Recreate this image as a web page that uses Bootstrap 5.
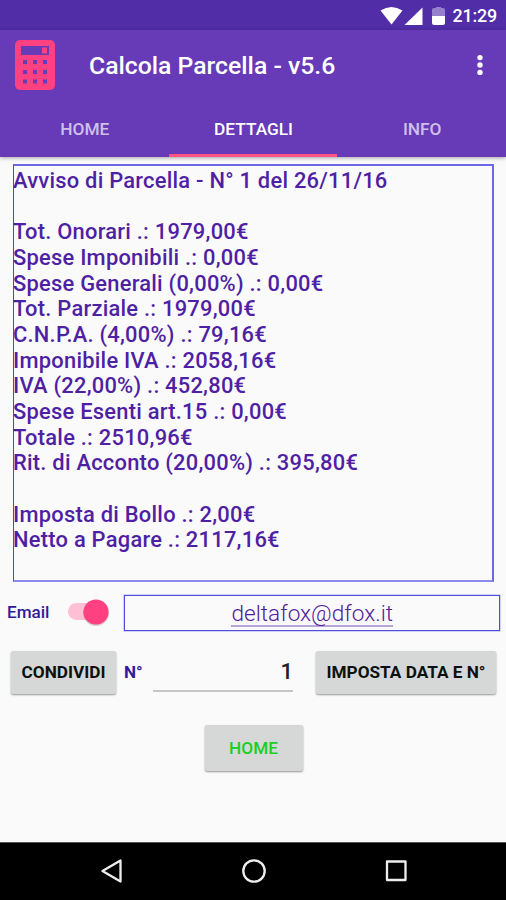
<!DOCTYPE html>
<html lang="it">
<head>
<meta charset="utf-8">
<meta name="viewport" content="width=device-width, initial-scale=1">
<title>Calcola Parcella</title>
<link href="https://cdn.jsdelivr.net/npm/bootstrap@5.3.0/dist/css/bootstrap.min.css" rel="stylesheet">
<style>
body{font-family:Roboto,"Liberation Sans",sans-serif;background:#fafafa;height:900px;overflow:hidden;line-height:1.172}
svg{display:block;flex:none}
.medium{font-weight:500}
.status-bar{height:30px;background:#512da8;padding:1px 9px 0 0;font-size:17.9px}
.clock{margin-left:7px;letter-spacing:-.2px}
.app-header{height:127px;background:#673ab7;box-shadow:0 1px 4px rgba(0,0,0,.35)}
.title-bar{height:72px;padding:0 22px 2px 15px}
.app-title{font-size:24.75px;margin:2px 0 0 34px}
.app-tabs{height:55px}
.app-tabs .nav-link{color:#cfc0e9;font-size:17.3px;padding:2px 0 0 1px;border-radius:0;border-bottom:3px solid transparent}
.app-tabs .nav-link.active{color:#fff;border-color:#ff5484}
.report{margin:7px 12px 0 13px;height:418px;border:2px solid #6c68e8;border-left:1px solid #4844e4;border-bottom-color:#8d8aee;color:#4f1fa4;font-size:21.9px;letter-spacing:.24px;line-height:25.67px;padding-top:2px;white-space:pre-line}
.report-text{margin-left:-1px}
.email-row{margin-top:13px;height:37px;padding:0 6px 0 7px}
.blue-label{color:#311b9b;font-size:17.1px}
.email-label{margin-top:-3px}
.switch{width:42px;margin:-1px 15px 0 18px}
.email-box{border:1px solid #524ddf;box-shadow:0 0 0 .5px #a9a6f2;color:#512099;font-size:22.6px;font-weight:300;height:36px;margin-top:-1px;padding-top:3px}
.email-box span{border-bottom:2px solid #b7a5d8;line-height:22px}
.actions{margin-top:19px;padding:0 10px 0 11px}
.btn-raised{background:#d6d7d7;border:0;border-radius:2px;box-shadow:0 1px 2px rgba(0,0,0,.4);font-size:17.2px;line-height:1;padding:1px 0 0;color:#0b120d}
.w-share{width:105px;height:43px}
.w-set{width:180px;height:43px}
.w-home{width:98px;height:46px;color:#17cf25;margin:31px 0 0 1px}
.number-field{width:140px;height:39px;border-bottom:2px solid #c6c6c6;font-size:22px;margin:0 23px 0 11px;padding-top:1px;color:#222}
.nav-keys{height:58px;border-top:1px solid #555}
</style>
</head>
<body class="d-flex flex-column">
<div class="status-bar d-flex align-items-center justify-content-end text-white flex-shrink-0">
<svg width="66" height="20" viewBox="0 0 66 20" fill="#fff"><path d="M.5 4.500Q11.500-2.500 22.500 4.500L11.500 18.500Z"/><path d="M42.500 1.500V19H24.500Z"/><path d="M52 4a2 2 0 0 1 2-2h2V1h5v1h2a2 2 0 0 1 2 2v6H52Z" fill="#9680cb"/><path d="M52 10h13v7a2 2 0 0 1-2 2h-9a2 2 0 0 1-2-2Z"/></svg>
<span class="clock medium">21:29</span>
</div>
<header class="app-header flex-shrink-0">
<div class="title-bar d-flex align-items-center">
<svg width="40" height="52" viewBox="0 0 40 52"><rect y="1" width="40" height="50" rx="5" fill="#ff4081"/><path fill="#673ab7" d="M6 7h28v9H6z"/><path fill="#ff4081" d="M27 8.500h5v6h-5z"/><g fill="#673ab7"><path d="M8 21h4v4H8zM18 21h4v4h-4zM28 21h4v4h-4zM8 31h4v4H8zM18 31h4v4h-4zM28 31h4v4h-4zM8 40.500h4v4H8zM18 40.500h4v4h-4zM28 40.500h4v4h-4z"/></g></svg>
<h1 class="app-title text-white medium me-auto text-nowrap">Calcola Parcella - v5.6</h1>
<svg width="8" height="22" viewBox="0 0 8 22" fill="#fff"><circle cx="4" cy="3.600" r="2.700"/><circle cx="4" cy="11" r="2.700"/><circle cx="4" cy="18.400" r="2.700"/></svg>
</div>
<nav class="nav nav-fill app-tabs medium flex-nowrap">
<a class="nav-link w-100 d-flex align-items-center justify-content-center" href="#">HOME</a>
<a class="nav-link w-100 d-flex align-items-center justify-content-center active" href="#">DETTAGLI</a>
<a class="nav-link w-100 d-flex align-items-center justify-content-center" href="#">INFO</a>
</nav>
</header>
<main class="flex-grow-1">
<section class="report medium"><div class="report-text">Avviso di Parcella - N° 1 del 26/11/16

Tot. Onorari .: 1979,00€
Spese Imponibili .: 0,00€
Spese Generali (0,00%) .: 0,00€
Tot. Parziale .: 1979,00€
C.N.P.A. (4,00%) .: 79,16€
Imponibile IVA .: 2058,16€
IVA (22,00%) .: 452,80€
Spese Esenti art.15 .: 0,00€
Totale .: 2510,96€
Rit. di Acconto (20,00%) .: 395,80€

Imposta di Bollo .: 2,00€
Netto a Pagare .: 2117,16€</div></section>
<div class="email-row d-flex align-items-center">
<span class="blue-label email-label medium">Email</span>
<svg class="switch" height="32" viewBox="0 0 42 32"><rect x="1" y="6" width="34" height="17" rx="8.500" fill="#ffc0d5"/><circle cx="29" cy="16.500" r="12.800" fill="#000" opacity=".13"/><circle cx="29" cy="15" r="12.600" fill="#ff4081"/></svg>
<div class="email-box flex-grow-1 d-flex align-items-center justify-content-center"><span>deltafox@dfox.it</span></div>
</div>
<div class="actions d-flex align-items-center">
<button class="btn btn-raised w-share fw-bold flex-shrink-0">CONDIVIDI</button>
<span class="blue-label ms-2 fw-bold">N°</span>
<div class="number-field medium d-flex align-items-center justify-content-end ms-auto">1</div>
<button class="btn btn-raised w-set fw-bold flex-shrink-0 text-nowrap">IMPOSTA DATA E N°</button>
</div>
<div class="text-center"><button class="btn btn-raised w-home medium">HOME</button></div>
</main>
<footer class="nav-keys bg-black d-flex justify-content-center flex-shrink-0">
<svg width="506" height="57" viewBox="0 0 506 57" fill="none" stroke="#eee" stroke-width="2.300" stroke-linejoin="round"><path d="M102.500 28 120.500 17.500v21Z"/><circle cx="254" cy="28" r="10.700"/><path d="M387 18.500h18.500v18.500H387z"/></svg>
</footer>
<script src="https://cdn.jsdelivr.net/npm/bootstrap@5.3.0/dist/js/bootstrap.bundle.min.js"></script>
</body>
</html>
